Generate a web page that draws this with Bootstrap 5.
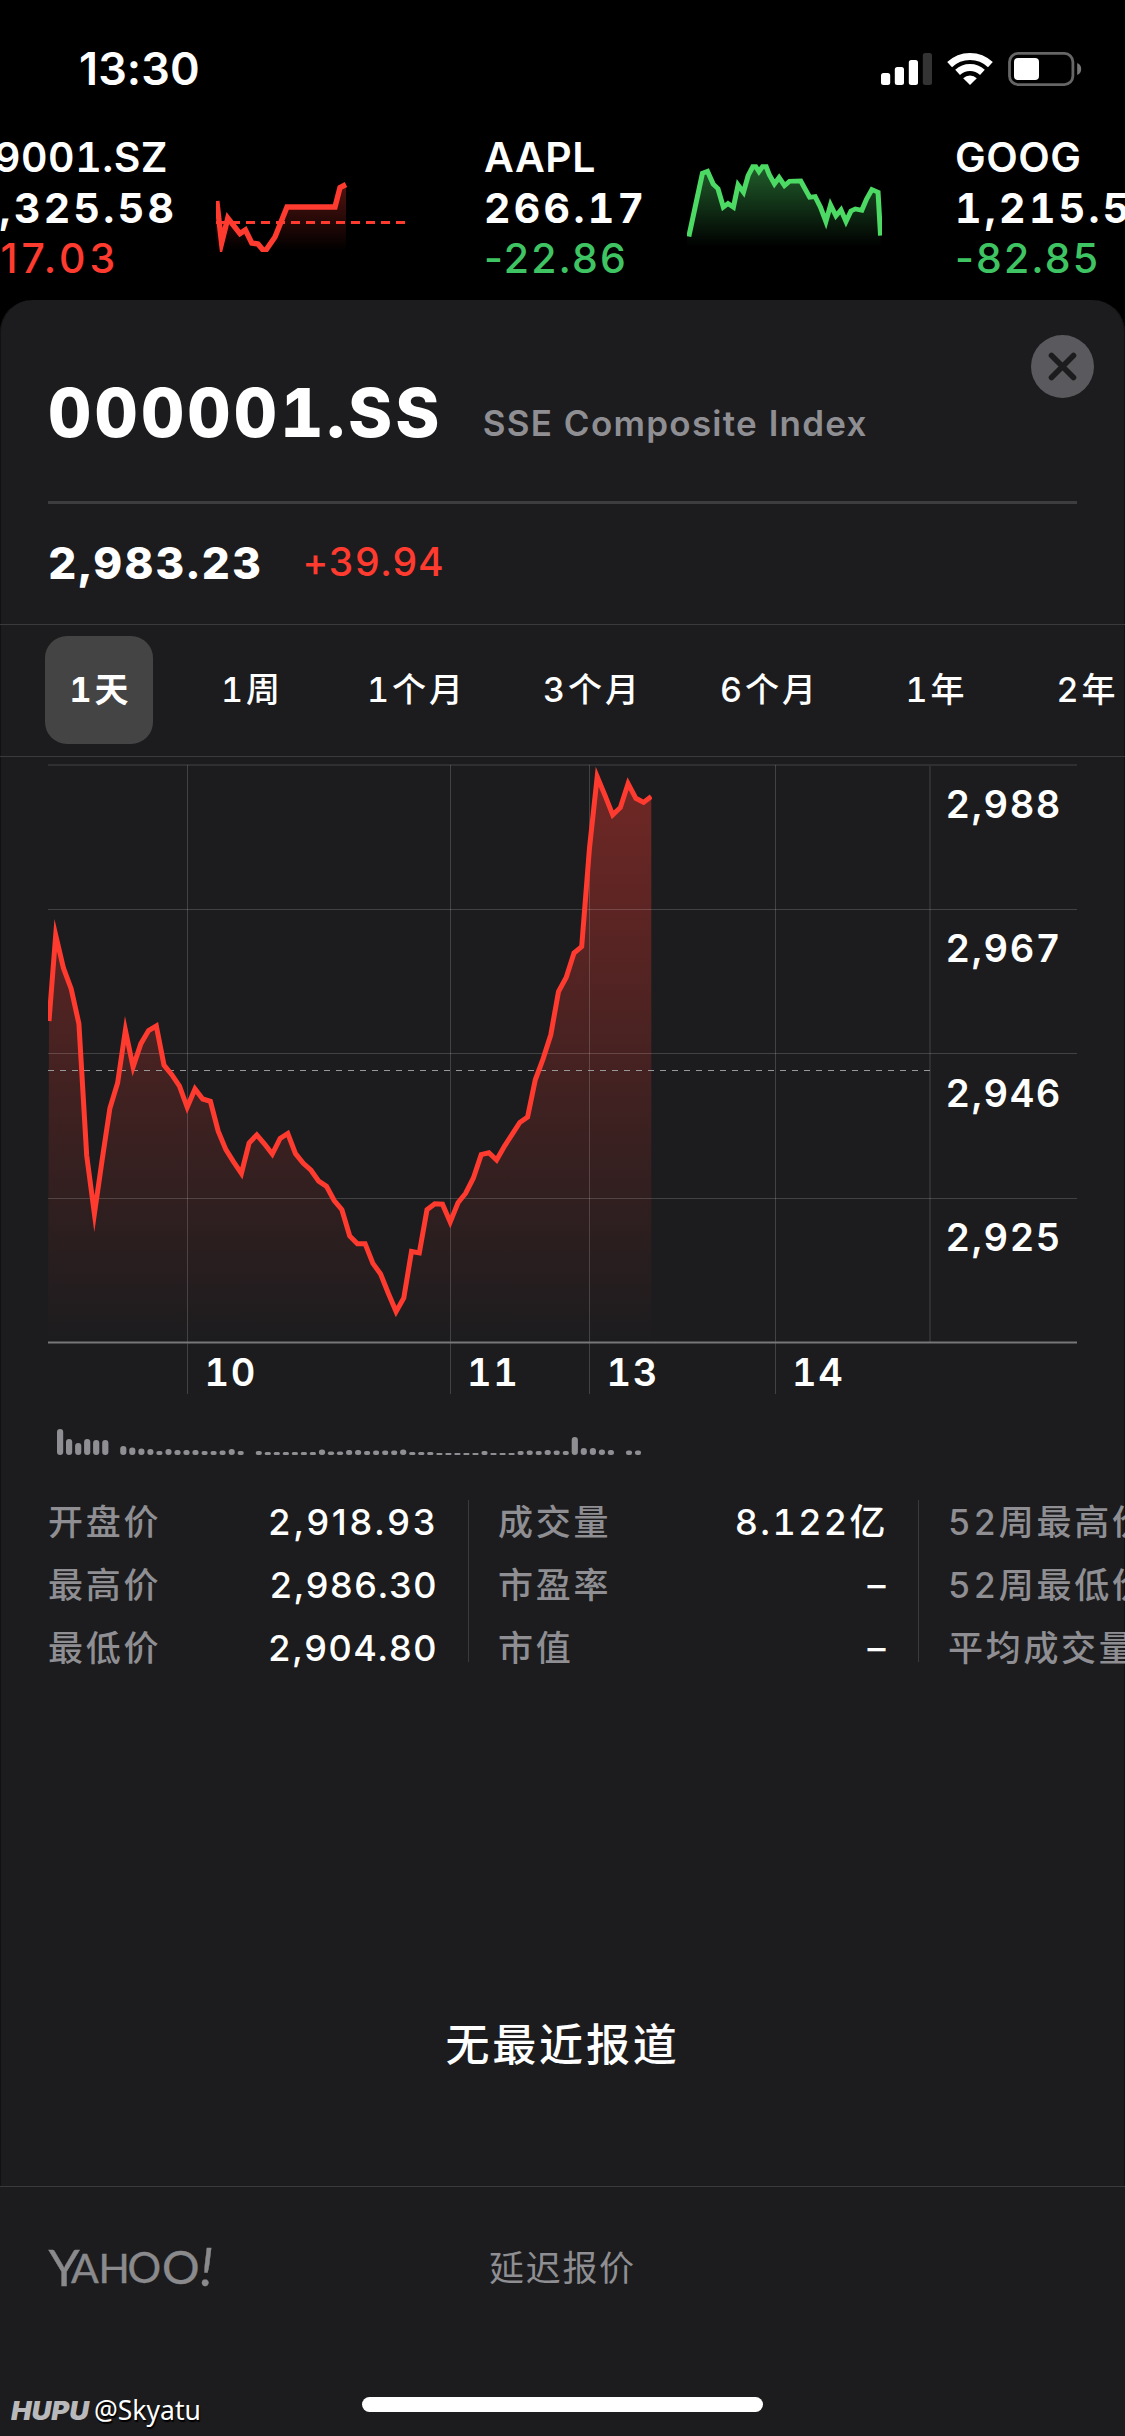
<!DOCTYPE html>
<html lang="zh-CN">
<head>
<meta charset="utf-8">
<meta name="viewport" content="width=device-width, initial-scale=1">
<title>000001.SS</title>
<link rel="stylesheet" href="https://cdn.jsdelivr.net/npm/bootstrap@5.3.0/dist/css/bootstrap.min.css">
<script src="https://cdn.jsdelivr.net/npm/bootstrap@5.3.0/dist/js/bootstrap.bundle.min.js"></script>
<style>
  body { width: 1125px; height: 2436px; overflow: hidden; background: #000; color: #fff;
    font-family: Inter, "Noto Sans CJK SC", sans-serif; font-variant-numeric: tabular-nums; }
  svg { display: block; flex: none; }
  .up { color: #ff3b30; }
  .down { color: #3fc463; }
  .muted { color: #8e8e93; }

  .status-bar { height: 132px; padding: 6px 43px 0 79px; }
  .clock { font-size: 45px; font-weight: 600; letter-spacing: .1px; line-height: 60px; font-variant-numeric: normal; }

  .ticker { height: 168px; padding-left: 0; }
  .quote { flex: none; margin-right: 73px; }
  .quote:first-child { margin-left: -60px; }
  .quote-text { width: 203px; font-size: 41px; line-height: 50.6px; white-space: nowrap; }
  .quote-wide { width: 276px; }
  .sym { font-weight: 600; letter-spacing: .5px; }
  .last { font-weight: 750; letter-spacing: 3.3px; }
  .chg { font-weight: 500; letter-spacing: 2.1px; font-variant-numeric: normal; }
  .quote-wide .chg { letter-spacing: 4px; padding-left: 8px; }

  .sheet { height: 2136px; background: #1c1c1e; border-radius: 32px 32px 0 0; }
  .edges { height: 1886px; box-shadow: inset 1px 0 #111113, inset -1px 0 #111113; border-radius: 32px 32px 0 0; }
  .sheet-head { height: 204px; margin: 0 48px; padding-top: 73px; border-bottom: 3px solid #3d3d40; }
  .title { font-size: 67px; font-weight: 800; line-height: 80px; letter-spacing: 3.2px; }
  .subtitle { font-size: 35px; font-weight: 600; line-height: 80px; letter-spacing: 1.25px; padding-top: 10px; margin-left: 40px; }
  .close-btn { top: 35px; right: 31px; width: 63px; height: 63px; }
  .price-row { height: 120px; padding: 0 48px 3px; }
  .price { font-size: 44px; font-weight: 800; letter-spacing: 2.7px; }
  .delta { font-size: 39px; font-weight: 500; letter-spacing: .8px; margin-left: 39px; }

  .ranges { height: 133px; border-top: 1px solid #3a3a3c; border-bottom: 1px solid #3a3a3c; padding: 0 0 1px 45px; }
  .range { flex: none; height: 108px; line-height: 107px; border-radius: 22px; padding-left: 3px; text-align: center; font-size: 34px; font-weight: 500; letter-spacing: 3px; white-space: nowrap; }
  .range.active { background: #444445; font-weight: 700; }

  .stats { height: 189px; padding-left: 48px; }
  .stat-col { flex: none; width: 389px; padding-top: 1px; font-size: 36px; font-weight: 500; }
  .stat-row { line-height: 63px; white-space: nowrap; }
  .stat-row .muted { font-size: 35px; letter-spacing: 2.7px; }
  .stat-val { letter-spacing: 2.4px; margin-right: -1px; }
  .stat-num { letter-spacing: 1.6px; font-variant-numeric: normal; }
  .stat-num-open { letter-spacing: 2.7px; font-variant-numeric: normal; }
  .rule { flex: none; width: 1px; height: 162px; margin: 10px 29px 0 31px; background: #3a3a3c; }

  .news { height: 507px; padding-top: 336px; font-size: 44px; font-weight: 500; line-height: 60px; letter-spacing: 2.8px; }
  .foot { height: 164px; border-top: 1px solid #3a3a3c; padding-left: 48px; }
  .delayed { font-size: 35px; letter-spacing: 1.7px; }
  .home-row { height: 86px; }
  .home-bar { width: 401px; height: 15px; border-radius: 8px; background: #fff; margin-top: 47px; }
  .watermark { left: 11px; top: 40px; }
  .handle { font: 400 26.5px/40px "Noto Sans", sans-serif; text-shadow: 1px 2px 1px #000; margin: 0 0 0 3px; }
</style>
</head>
<body>
<header class="status-bar d-flex align-items-center justify-content-between">
  <div class="clock">13:30</div>
  <svg width="201" height="34" viewBox="882 52 201 34">
    <g fill="#fff">
      <rect x="882" y="73" width="9.2" height="12" rx="2.5"/>
      <rect x="895.8" y="67" width="9.2" height="18" rx="2.5"/>
      <rect x="909.8" y="60" width="9.2" height="25" rx="2.5"/>
      <rect x="923.8" y="53" width="9.2" height="32" rx="2.5" fill="#333"/>
    </g>
    <g fill="none" stroke="#fff" stroke-width="7">
      <path d="M950.6 64.6 A29.5 29.5 0 0 1 991.4 64.6"/>
      <path d="M958.6 72.4 A18.3 18.3 0 0 1 983.4 72.4"/>
    </g>
    <path d="M971 85 L964.2 78.2 A9.8 9.8 0 0 1 977.8 78.2 Z" fill="#fff"/>
    <rect x="1010.5" y="53.4" width="63.4" height="31.2" rx="8.5" fill="none" stroke="#666" stroke-width="2.8"/>
    <rect x="1015" y="58" width="25" height="22" rx="4" fill="#fff"/>
    <path d="M1078.2 63 A6.5 6.5 0 0 1 1078.2 75 Z" fill="#777"/>
  </svg>
</header>

<section class="ticker d-flex overflow-hidden">
  <div class="quote d-flex">
    <div class="quote-text quote-wide">
      <div class="sym">399001.SZ</div><div class="last">10,325.58</div><div class="chg up">+117.03</div>
    </div>
    <svg width="195" height="120" viewBox="216 132 195 120">
      <defs><linearGradient id="gr" gradientUnits="userSpaceOnUse" x1="0" y1="165" x2="0" y2="251"><stop offset="0" stop-color="#ff3b30" stop-opacity=".42"/><stop offset="1" stop-color="#ff3b30" stop-opacity="0"/></linearGradient></defs>
      <path d="M216 201 L221.4 248 L227.5 216 L240 234 L245.4 230 L251.8 243 L258 244 L263 249.5 L266 249.5 L275 237 L287 207 L335 207 L340 187 L346 185 V252 H216 Z" fill="url(#gr)"/>
      <path d="M216 222.4 H405" stroke="#ff3b30" stroke-width="3" stroke-dasharray="9 6"/>
      <path d="M216.8 201 L221.6 243 L227.8 218 L240 233.6 L245.4 230 L251.8 243 L258 244 L263 250 L266 250 L275 237 L287 207 L335 207 L340 187.5 L346 184.5" fill="none" stroke="#ff3b30" stroke-width="5.4" stroke-miterlimit="10"/>
    </svg>
  </div>
  <div class="quote d-flex">
    <div class="quote-text"><div class="sym">AAPL</div><div class="last">266.17</div><div class="chg down">-22.86</div></div>
    <svg width="195" height="120" viewBox="352 396 542 333.5" preserveAspectRatio="none">
      <defs><linearGradient id="gg" gradientUnits="userSpaceOnUse" x1="0" y1="490" x2="0" y2="740"><stop offset="0" stop-color="#4cd964" stop-opacity=".45"/><stop offset="1" stop-color="#4cd964" stop-opacity="0"/></linearGradient></defs>
      <g transform="translate(0 396) scale(1 .925) translate(0 -396)">
      <path d="M357 710 L395 520 L409 514 L425 553 L438 566 L453 622 L466 611 L481 622 L494 555 L509 577 L522 527 L535 500 L543 500 L552 515 L562 500 L572 500 L581 525 L595 552 L608 533 L623 557 L637 544 L668 543 L693 592 L708 590 L723 622 L738 665 L751 615 L766 648 L780 630 L794 665 L808 633 L820 627 L838 631 L851 598 L866 569 L883 577 L890 707 V756 H352 V710 Z" fill="url(#gg)"/>
      <path d="M357 710 L395 520 L409 514 L425 553 L438 566 L453 622 L466 611 L481 622 L494 555 L509 577 L522 527 L535 500 L543 500 L552 515 L562 500 L572 500 L581 525 L595 552 L608 533 L623 557 L637 544 L668 543 L693 592 L708 590 L723 622 L738 665 L751 615 L766 648 L780 630 L794 665 L808 633 L820 627 L838 631 L851 598 L866 569 L883 577 L890 707" fill="none" stroke="#4cd964" stroke-width="14"/>
      </g>
    </svg>
  </div>
  <div class="quote d-flex"><div class="quote-text"><div class="sym">GOOG</div><div class="last">1,215.56</div><div class="chg down">-82.85</div></div></div>
</section>

<main class="sheet position-relative overflow-hidden">
  <div class="edges">
    <div class="sheet-head d-flex align-items-start">
      <div class="title">000001.SS</div>
      <div class="subtitle muted">SSE Composite Index</div>
    </div>
    <svg class="close-btn position-absolute" viewBox="0 0 63 63"><circle cx="31.5" cy="31.5" r="31.5" fill="#5a5a5e"/><path d="M20.5 20.5 L42.5 42.5 M42.5 20.5 L20.5 42.5" stroke="#1c1c1e" stroke-width="5.6" stroke-linecap="round"/></svg>
    <div class="price-row d-flex align-items-center">
      <div class="price">2,983.23</div><div class="delta up">+39.94</div>
    </div>
    <nav class="ranges d-flex align-items-center overflow-hidden">
      <div class="range active" style="width:108px">1天</div>
      <div class="range" style="width:195px">1周</div>
      <div class="range" style="width:134px">1个月</div>
      <div class="range" style="width:218px">3个月</div>
      <div class="range" style="width:136px">6个月</div>
      <div class="range" style="width:198px">1年</div>
      <div class="range" style="width:104px">2年</div>
    </nav>
    <svg id="chart" width="1125" height="733" viewBox="0 757 1125 733">
      <defs><linearGradient id="gm" gradientUnits="userSpaceOnUse" x1="0" y1="765" x2="0" y2="1342"><stop offset="0" stop-color="#ff3b30" stop-opacity=".38"/><stop offset="1" stop-color="#ff3b30" stop-opacity="0"/></linearGradient>
      <clipPath id="plot"><rect x="48" y="757" width="604" height="590"/></clipPath></defs>
      <path id="area" fill="url(#gm)"/>
      <path d="M48 765 H1077 M930 764 V1342" stroke="#fff" stroke-opacity=".085" stroke-width="2"/>
      <path d="M48 909.5 H1077 M48 1053.5 H1077 M48 1198.5 H1077 M187.5 765 V1394 M450.5 765 V1394 M589.5 765 V1394 M775.5 765 V1394" stroke="#fff" stroke-opacity=".17" stroke-width="1"/>
      <path d="M48 1342.5 H1077" stroke="#77777a" stroke-width="2"/>
      <path d="M48 1070.5 H930" stroke="#98989a" stroke-width="1.2" stroke-dasharray="6 6"/>
      <path id="trend" fill="none" stroke="#ff3b30" stroke-width="5" stroke-miterlimit="12" clip-path="url(#plot)"/>
      <g fill="#fff" font-size="38" font-weight="600" letter-spacing="1.6">
        <text x="945.5" y="818">2,988</text><text x="945.5" y="962.4">2,967</text><text x="945.5" y="1107">2,946</text><text x="945.5" y="1251.4">2,925</text>
        <text x="204.5" y="1386">10</text><text x="467" y="1386">11</text><text x="606.5" y="1386">13</text><text x="792" y="1386">14</text>
      </g>
      <g id="volume" fill="#8e8e93"></g>
    </svg>
    <div class="stats d-flex overflow-hidden">
      <div class="stat-col">
        <div class="stat-row d-flex justify-content-between"><span class="muted">开盘价</span><span class="stat-val stat-num-open">2,918.93</span></div>
        <div class="stat-row d-flex justify-content-between"><span class="muted">最高价</span><span class="stat-val stat-num">2,986.30</span></div>
        <div class="stat-row d-flex justify-content-between"><span class="muted">最低价</span><span class="stat-val stat-num">2,904.80</span></div>
      </div>
      <div class="rule"></div>
      <div class="stat-col">
        <div class="stat-row d-flex justify-content-between"><span class="muted">成交量</span><span class="stat-val">8.122亿</span></div>
        <div class="stat-row d-flex justify-content-between"><span class="muted">市盈率</span><span class="stat-val">–</span></div>
        <div class="stat-row d-flex justify-content-between"><span class="muted">市值</span><span class="stat-val">–</span></div>
      </div>
      <div class="rule"></div>
      <div class="stat-col">
        <div class="stat-row"><span class="muted">52周最高价</span></div>
        <div class="stat-row"><span class="muted">52周最低价</span></div>
        <div class="stat-row"><span class="muted">平均成交量</span></div>
      </div>
    </div>
    <div class="news text-center">无最近报道</div>
  </div>
  <footer class="foot d-flex align-items-center">
    <svg width="441" height="60" viewBox="48 2238 441 60" fill="#8a8a8d" stroke="#8a8a8d" stroke-width=".4" font-family="Lato, sans-serif">
      <text y="2285" font-size="50" x="48.5">Y<tspan font-size="41" x="71" dy="-3.5">A</tspan><tspan font-size="41" x="98.5">H</tspan><tspan font-size="42" x="127.5">O</tspan><tspan font-size="47" x="162" dy="1">O</tspan><tspan font-size="52" font-style="italic" x="200" dy="2.5">!</tspan></text>
    </svg>
    <div class="delayed muted">延迟报价</div>
  </footer>
  <div class="home-row d-flex justify-content-center position-relative">
    <div class="home-bar"></div>
    <div class="watermark position-absolute d-flex align-items-center">
      <svg width="80" height="26" viewBox="10 2398 80 26"><text x="10" y="2421" font-size="25.5" font-weight="900" font-style="italic" fill="#b9b9bb" textLength="78" lengthAdjust="spacingAndGlyphs">HUPU</text></svg>
      <span class="handle">@Skyatu</span>
    </div>
  </div>
</main>
<script>
  const prices = [612,425,497,542,618,905,1032,915,802,747,632,712,662,633,623,708,729,754,800,760,782,787,852,892,919,944,878,860,880,902,868,857,901,922,937,961,972,1003,1023,1080,1097,1097,1140,1163,1205,1245,1215,1114,1117,1023,1010,1011,1050,1008,987,954,903,899,915,885,859,833,821,740,695,642,548,517,464,450,235,80,120,163,147,95,127,136,123];
  const line = prices.map((p, i) => (48 + 7.735 * i + (i ? 0 : 1)).toFixed(1) + ' ' + (740 + p / 2.178).toFixed(1)).join(' L');
  document.getElementById('trend').setAttribute('d', 'M' + line);
  document.getElementById('area').setAttribute('d', 'M' + line + ' V1342 H48 Z');
  const volume = [26,16,12,16,15,15,0,9,7.5,6.5,6,4,6,5,5,5,4,4,4.5,6,4,0,4,3,3,3,3,3,3,5.5,3.5,3.5,5,5,4,4.5,4.5,4.5,5.5,3,3,3,2,2,2,2,2,4,2,2,2,4,4.5,4,5,4.5,4,18,7,7,5.5,5,0,4.5,4.5];
  document.getElementById('volume').innerHTML = volume.map((h, i) => h ? `<rect x="${(57 + 9.03 * i).toFixed(1)}" y="${1455 - h}" width="6.2" height="${h}" rx="${Math.min(3, h / 2)}"/>` : '').join('');
</script>
</body>
</html>
